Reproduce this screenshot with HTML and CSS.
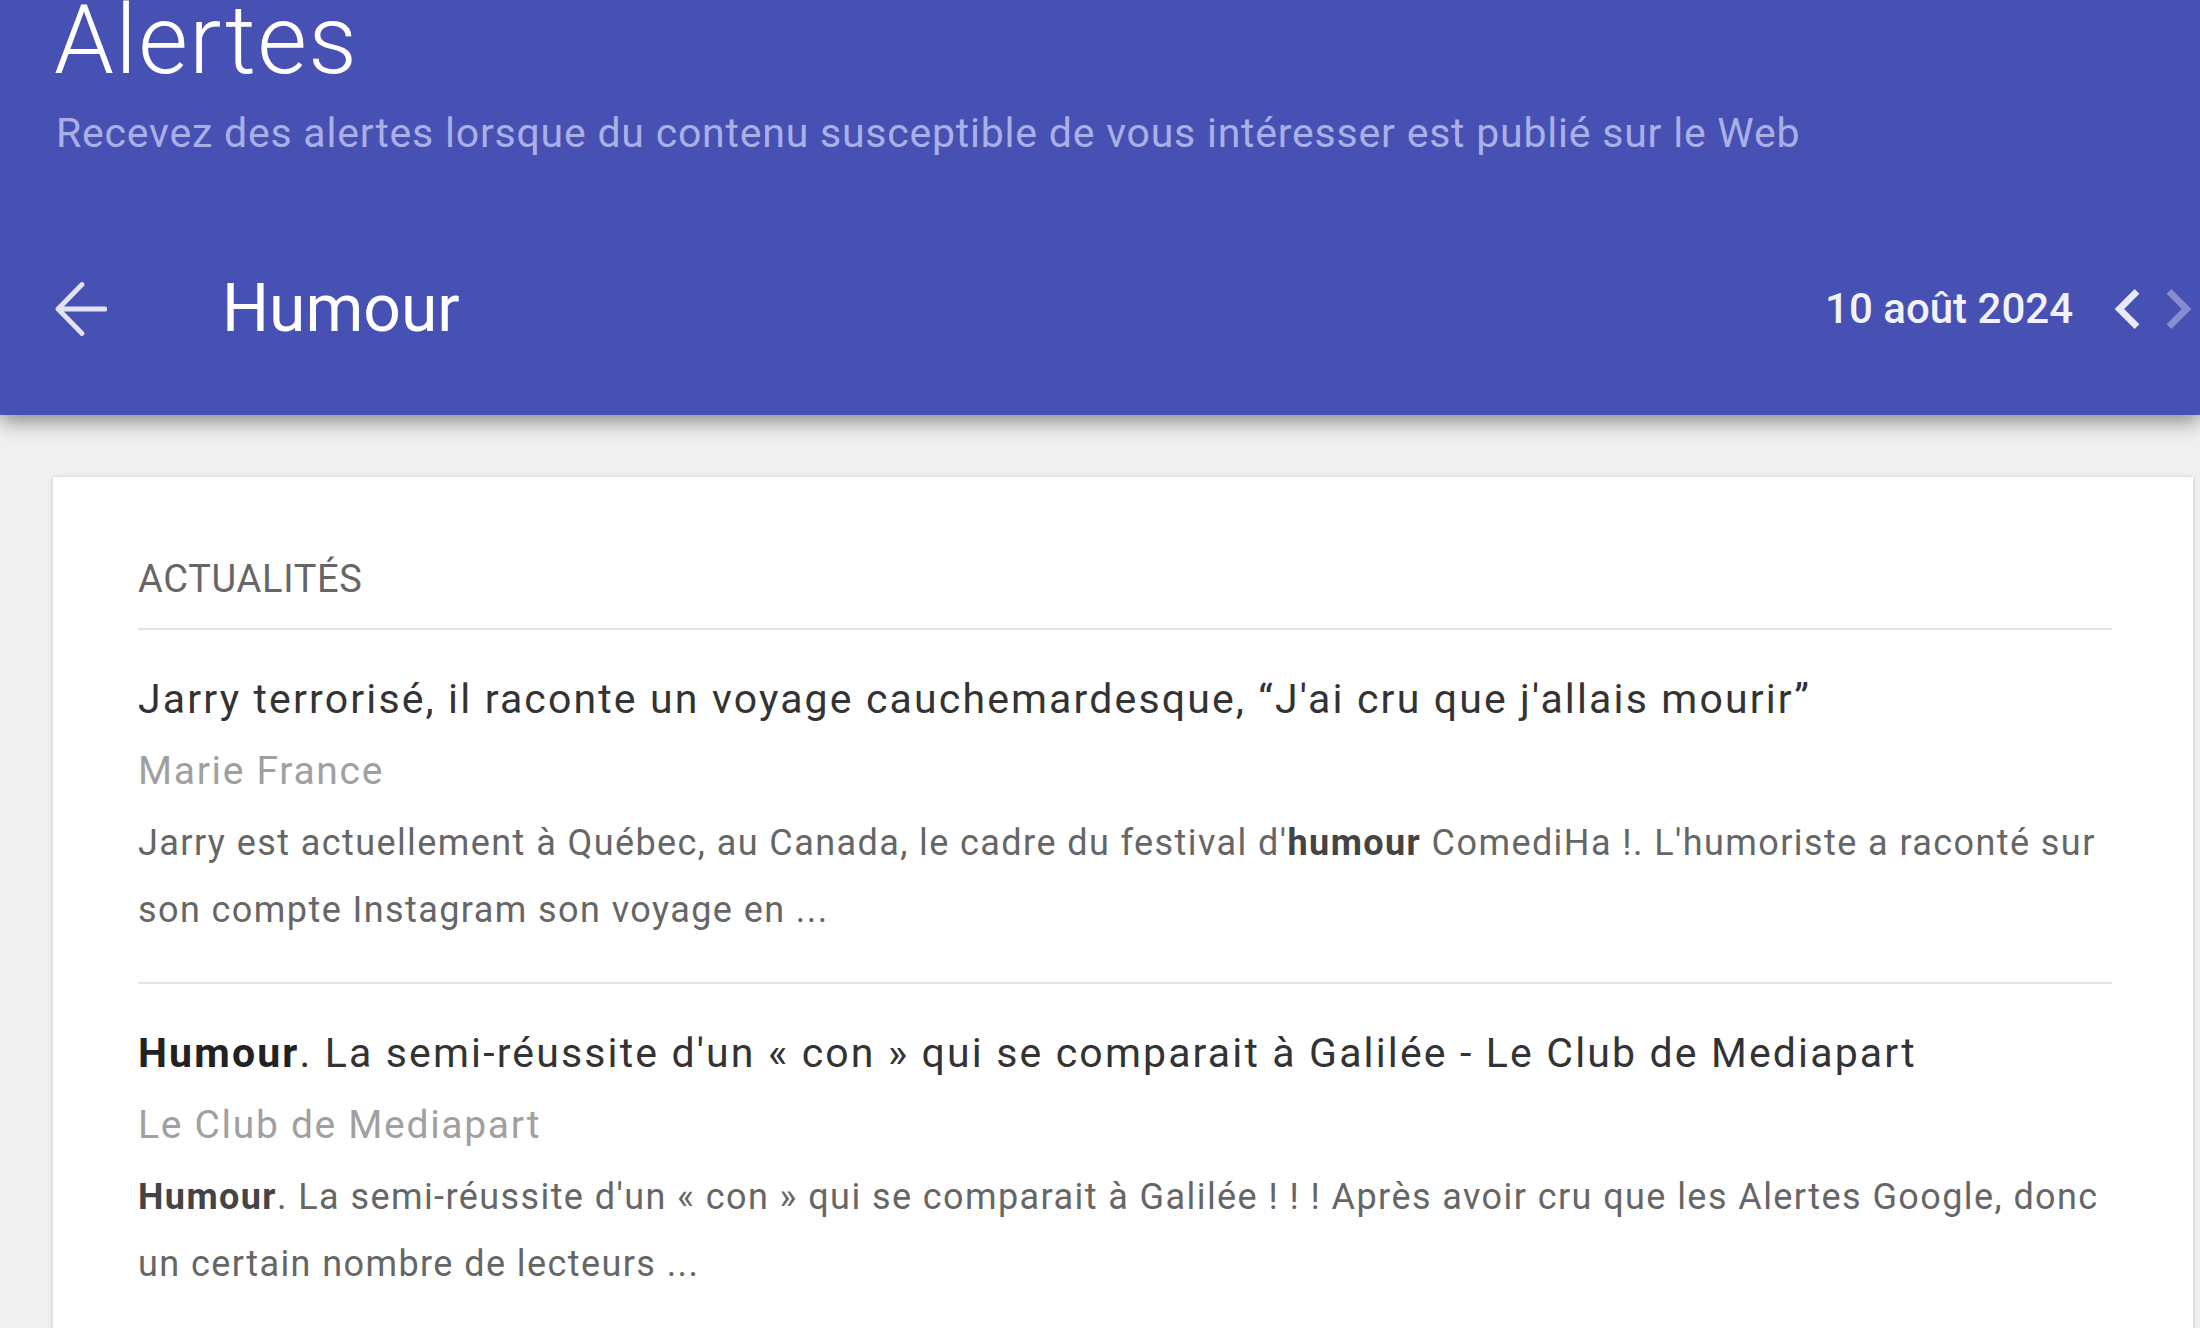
FILE: index.html
```html
<!DOCTYPE html>
<html lang="fr">
<head>
<meta charset="utf-8">
<title>Alertes - Humour</title>
<link rel="stylesheet" href="styles.css">
</head>
<body>
<header class="header">
  <h1 class="title">Alertes</h1>
  <p class="subtitle">Recevez des alertes lorsque du contenu susceptible de vous intéresser est publié sur le Web</p>
  <div class="bar">
    <div class="bar-left">
      <svg class="back" width="52" height="56" viewBox="0 0 52 56" aria-hidden="true">
        <path d="M50 28H4M27 3.5L3 28l24 24.5" fill="none" stroke="currentColor" stroke-width="4.8" stroke-linecap="round" stroke-linejoin="round"/>
      </svg>
      <span class="query">Humour</span>
    </div>
    <div class="bar-right">
      <span class="date">10 août 2024</span>
      <svg class="chev" width="26" height="40" viewBox="7.8 6 7.8 12" preserveAspectRatio="none" aria-hidden="true">
        <path d="M15.41 7.41L14 6l-6 6 6 6 1.41-1.41L10.83 12z" fill="currentColor"/>
      </svg>
      <svg class="chev chev-off" width="26" height="40" viewBox="8.4 6 7.8 12" preserveAspectRatio="none" aria-hidden="true">
        <path d="M10 6L8.59 7.41 13.17 12l-4.58 4.59L10 18l6-6z" fill="currentColor"/>
      </svg>
    </div>
  </div>
</header>
<main class="main">
  <section class="card">
    <h2 class="section">ACTUALITÉS</h2>
    <article class="item">
      <div class="item-title">Jarry terrorisé, il raconte un voyage cauchemardesque, “J'ai cru que j'allais mourir”</div>
      <div class="item-source">Marie France</div>
      <div class="item-snippet">Jarry est actuellement à Québec, au Canada, le cadre du festival d'<b>humour</b> ComediHa !. L'humoriste a raconté sur son compte Instagram son voyage en ...</div>
    </article>
    <article class="item">
      <div class="item-title"><b>Humour</b>. La semi-réussite d'un « con » qui se comparait à Galilée - Le Club de Mediapart</div>
      <div class="item-source">Le Club de Mediapart</div>
      <div class="item-snippet"><b>Humour</b>. La semi-réussite d'un « con » qui se comparait à Galilée ! ! ! Après avoir cru que les Alertes Google, donc un certain nombre de lecteurs ...</div>
    </article>
  </section>
</main>
</body>
</html>
```

FILE: styles.css
```css
html, body {
  margin: 0;
  padding: 0;
  overflow: hidden;
  height: 100%;
}
body {
  background: #f0f0f0;
  font-family: Roboto, "Noto Sans", "Liberation Sans", sans-serif;
  width: 2200px;
}
.header {
  background: #4751b3;
  color: #fff;
  padding: 0 0 56px 56px;
  box-shadow: 0 6px 20px rgba(0, 0, 0, 0.45);
  position: relative;
  z-index: 1;
}
.title {
  margin: -8px 0 0 -2px;
  font-size: 96px;
  font-weight: 300;
  line-height: 96px;
  letter-spacing: 1.3px;
}
.subtitle {
  margin: 21px 0 0 0;
  font-size: 41px;
  line-height: 48px;
  letter-spacing: 0.78px;
  color: #aab0e6;
}
.bar {
  margin-top: 102px;
  height: 100px;
  display: flex;
  align-items: center;
  justify-content: space-between;
}
.bar-left {
  display: flex;
  align-items: center;
}
.back {
  color: #e2e4f5;
  margin-left: -1px;
}
.query {
  margin-left: 115px;
  font-size: 66px;
  line-height: 80px;
  font-weight: 400;
  color: #fff;
}
.bar-right {
  display: flex;
  align-items: center;
  padding-right: 8px;
}
.date {
  font-size: 42px;
  line-height: 56px;
  font-weight: 500;
  color: #f1f2fb;
  margin-right: 41px;
}
.chev {
  color: #e8eaf7;
}
.chev-off {
  color: rgba(255, 255, 255, 0.35);
  margin-left: 26px;
}
.main {
  padding: 62px 7px 0 53px;
}
.card {
  background: #fff;
  box-shadow: 0 1px 5px rgba(0, 0, 0, 0.2);
  padding: 80px 81px 40px 85px;
  min-height: 1000px;
}
.section {
  margin: 0;
  font-size: 38px;
  line-height: 44px;
  letter-spacing: 0.7px;
  font-weight: 400;
  color: #666;
  padding-bottom: 27px;
  border-bottom: 2px solid #e3e3e3;
}
.item {
  padding: 41px 0 38px 0;
  border-bottom: 2px solid #e3e3e3;
}
.item:last-child {
  border-bottom: none;
}
.item-title {
  font-size: 41px;
  line-height: 56px;
  letter-spacing: 2.15px;
  color: #333;
}
.item-title b {
  font-weight: 700;
  color: #222;
}
.item-source {
  margin-top: 20px;
  font-size: 39px;
  line-height: 48px;
  letter-spacing: 1.7px;
  color: #a0a0a0;
}
.item-snippet {
  margin-top: 15px;
  font-size: 36px;
  line-height: 67px;
  letter-spacing: 1.42px;
  color: #666;
}
.item-snippet b {
  font-weight: 700;
  color: #444;
}
```
